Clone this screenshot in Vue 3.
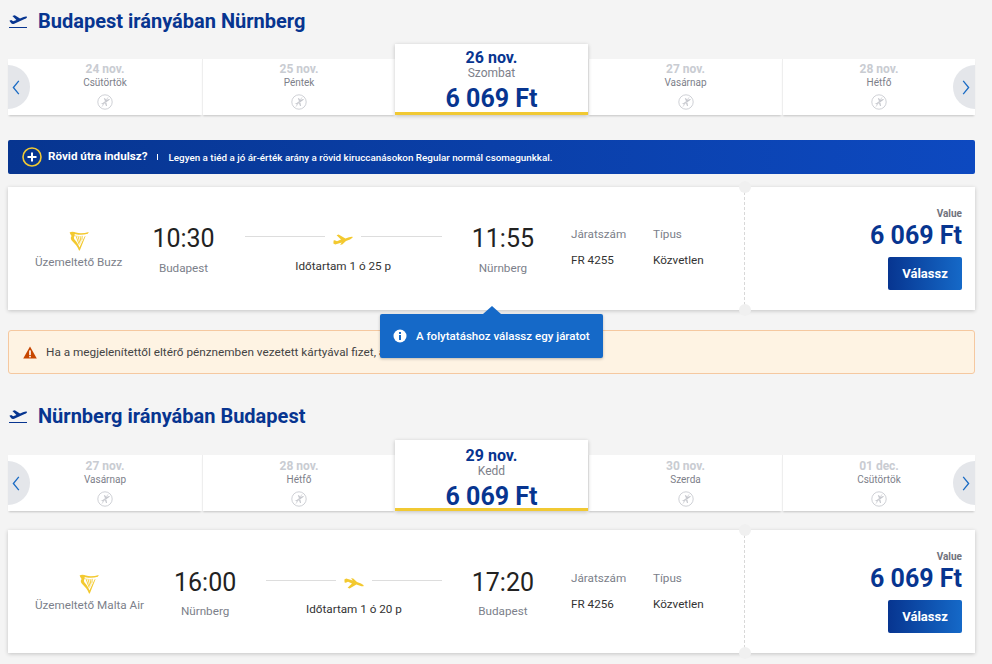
<template>
  <div class="page">
    <section v-for="(leg, i) in legs" :key="i" class="leg" :class="{ second: i === 1 }">
      <h2 class="title">
        <svg class="title-icon" viewBox="0 0 18 15">
          <path d="M0.4 6.8 L2.2 6.1 L4.2 7.3 L7.4 6 L3.4 1.9 L5.8 1.2 L11 4.6 L14.6 3 C16 2.4 17.7 2.2 18 2.9 C18.2 3.6 17 4.5 15.6 5.1 L5.2 9.8 C3.8 10.4 3 10.1 2.2 9.3 Z" fill="#073590"/>
          <rect x="0" y="13" width="18" height="1" fill="#073590"/>
        </svg>
        {{ leg.title }}
      </h2>

      <div class="strip">
        <div class="cells">
          <template v-for="d in leg.days" :key="d.date">
            <div v-if="d.price" class="cell active">
              <div class="a-date">{{ d.date }}</div>
              <div class="a-day">{{ d.day }}</div>
              <div class="a-price">{{ d.price }}</div>
            </div>
            <div v-else class="cell">
              <div class="c-date">{{ d.date }}</div>
              <div class="c-day">{{ d.day }}</div>
              <svg class="no-flight" viewBox="0 0 16 16">
                <circle cx="8" cy="8" r="7.2" fill="none" stroke="#cfd1d6" stroke-width="1"/>
                <path d="M3.6 9.2 L5 9.4 L10.6 5.6 C11.6 5 12.6 4.8 12.7 5.3 C12.8 5.8 12 6.5 11 7 L5.6 10.6 Z M6.8 4.2 L8 4.2 L9.6 6.6 L8.2 7.4 Z M8 9.2 L9.4 8.4 L10 12 L9 12 Z" fill="#c4c6cc"/>
                <path d="M5 12.6 L11 3.4" stroke="#cfd1d6" stroke-width="0.8"/>
              </svg>
            </div>
          </template>
        </div>
        <div class="arrow left">
          <svg viewBox="0 0 8 16" class="chev"><path d="M7 1 L1.2 8 L7 15" fill="none" stroke="#1a6bc4" stroke-width="1.4"/></svg>
        </div>
        <div class="arrow right">
          <svg viewBox="0 0 8 16" class="chev"><path d="M1 1 L6.8 8 L1 15" fill="none" stroke="#1a6bc4" stroke-width="1.4"/></svg>
        </div>
      </div>

      <div v-if="i === 0" class="promo">
        <svg class="plus" viewBox="0 0 20 20">
          <circle cx="10" cy="10" r="9" fill="none" stroke="#f1c933" stroke-width="1.6"/>
          <path d="M10 5.5 V14.5 M5.5 10 H14.5" stroke="#fff" stroke-width="2"/>
        </svg>
        <span class="promo-title">Rövid útra indulsz?</span>
        <span class="promo-sep"></span>
        <span class="promo-text">Legyen a tiéd a jó ár-érték arány a rövid kiruccanásokon Regular normál csomagunkkal.</span>
      </div>

      <div class="card">
        <div class="main">
          <div class="operator">
            <svg class="harp" viewBox="0 0 20 20">
              <path d="M0.6 1.6 C2.6 0.2 5 0.8 7 1.6 C10.6 2.8 15.4 2.4 19.8 1 L18.8 2.8 C14.6 4 10.4 4.2 6.8 3.2 L5.4 3 C6.4 4 5.6 5 5 6 C4.6 7.2 5.4 8.4 6.4 9.6 C8 11.6 9.6 13.8 10.4 16.4 L15.6 5.6 L16.6 5 L10.8 19.6 L10 19.6 C8.8 15.6 5.8 12.6 3.4 10.2 C1.8 8.6 1.2 6.8 2.6 5 C1.8 4 1 2.8 0.6 1.6 Z" fill="#f3c92f"/>
              <path d="M6.8 4.4 L10.2 13.6 M8.9 4.8 L11 12.4 M11 5 L11.9 10.6 M13.2 4.8 L12.9 8.8" stroke="#f3c92f" stroke-width="0.9" fill="none"/>
            </svg>
            <div class="muted">Üzemeltető {{ leg.operator }}</div>
          </div>
          <div class="stop">
            <div class="time">{{ leg.dep }}</div>
            <div class="muted city">{{ leg.from }}</div>
          </div>
          <div class="route">
            <div class="route-line">
              <span class="rule"></span>
              <svg class="route-plane" :class="{ flip: i === 1 }" viewBox="0 0 20 11">
                <path d="M0.4 9.6 L2.2 10.4 L8.8 8.6 L7 10.8 L9.2 10.4 L13 7 L17 5.4 C18.6 4.6 20 3.6 19.7 3 C19.4 2.4 17.6 2.6 16 3.2 L12.4 4.6 L5.6 0.6 L3.6 1.2 L8 5.6 L4 7.2 L1.8 6.2 L0.6 6.6 Z" fill="#f3c92f"/>
              </svg>
              <span class="rule"></span>
            </div>
            <div class="duration">Időtartam {{ leg.duration }}</div>
          </div>
          <div class="stop">
            <div class="time">{{ leg.arr }}</div>
            <div class="muted city">{{ leg.to }}</div>
          </div>
          <div class="info number">
            <div class="muted">Járatszám</div>
            <div class="val">{{ leg.flight }}</div>
          </div>
          <div class="info">
            <div class="muted">Típus</div>
            <div class="val">Közvetlen</div>
          </div>
        </div>
        <div class="fare">
          <div class="fare-name">Value</div>
          <div class="fare-price">6 069 Ft</div>
          <button class="pick" type="button">Válassz</button>
        </div>
        <span class="notch top"></span>
        <span class="notch bottom"></span>

        <div v-if="i === 0" class="tip">
          <svg class="tip-icon" viewBox="0 0 14 14">
            <circle cx="7" cy="7" r="6.5" fill="#fff"/>
            <rect x="6" y="6" width="2" height="5" fill="#1569c8"/>
            <rect x="6" y="3" width="2" height="2" fill="#1569c8"/>
          </svg>
          A folytatáshoz válassz egy járatot
        </div>
      </div>

      <div v-if="i === 0" class="alert">
        <svg class="warn" viewBox="0 0 14 13">
          <path d="M7 0.4 L13.8 12.6 H0.2 Z" fill="#c74600"/>
          <rect x="6.2" y="4.4" width="1.6" height="4.6" fill="#fff"/>
          <rect x="6.2" y="9.8" width="1.6" height="1.6" fill="#fff"/>
        </svg>
        Ha a megjelenítettől eltérő pénznemben vezetett kártyával fizet, a
      </div>
    </section>
  </div>
</template>

<script setup>
const legs = [
  {
    title: 'Budapest irányában Nürnberg',
    days: [
      { date: '24 nov.', day: 'Csütörtök' },
      { date: '25 nov.', day: 'Péntek' },
      { date: '26 nov.', day: 'Szombat', price: '6 069 Ft' },
      { date: '27 nov.', day: 'Vasárnap' },
      { date: '28 nov.', day: 'Hétfő' }
    ],
    operator: 'Buzz',
    dep: '10:30',
    from: 'Budapest',
    arr: '11:55',
    to: 'Nürnberg',
    duration: '1 ó 25 p',
    flight: 'FR 4255'
  },
  {
    title: 'Nürnberg irányában Budapest',
    days: [
      { date: '27 nov.', day: 'Vasárnap' },
      { date: '28 nov.', day: 'Hétfő' },
      { date: '29 nov.', day: 'Kedd', price: '6 069 Ft' },
      { date: '30 nov.', day: 'Szerda' },
      { date: '01 dec.', day: 'Csütörtök' }
    ],
    operator: 'Malta Air',
    dep: '16:00',
    from: 'Nürnberg',
    arr: '17:20',
    to: 'Budapest',
    duration: '1 ó 20 p',
    flight: 'FR 4256'
  }
];
</script>

<style>
html, body {
  margin: 0;
  background: #f4f4f4;
}
</style>

<style scoped>
.page {
  width: 967px;
  height: 664px;
  overflow: hidden;
  padding: 9px 17px 0 8px;
  font-family: Roboto, "Liberation Sans", sans-serif;
  color: #222;
}

.leg.second {
  margin-top: 30px;
}

.title {
  display: flex;
  align-items: center;
  gap: 11px;
  margin: 0;
  height: 24px;
  font-size: 20px;
  font-weight: 700;
  line-height: 23px;
  color: #073590;
}

.title-icon {
  width: 18px;
  height: 15px;
  margin-left: 1px;
}

.strip {
  position: relative;
  margin-top: 11px;
  height: 72px;
}

.second .strip {
  margin-top: 12px;
}

.cells {
  display: grid;
  grid-template-columns: 194px 193px 193px 194px 193px;
  height: 72px;
}

.cell {
  margin-top: 15px;
  height: 56px;
  background: #fff;
  border-left: 1px solid #eee;
  box-shadow: 0 2px 2px -1px rgba(0, 0, 0, 0.2);
  display: flex;
  flex-direction: column;
  align-items: center;
  padding-top: 4px;
  box-sizing: border-box;
}

.cell:first-child {
  border-left: 0;
}

.second .cell {
  padding-top: 5px;
}

.c-date {
  font-size: 12px;
  line-height: 13px;
  font-weight: 700;
  color: #c9ccd2;
}

.c-day {
  font-size: 10px;
  line-height: 13px;
  color: #7d808a;
}

.no-flight {
  width: 16px;
  height: 16px;
  margin-top: 5px;
}

.cell.active {
  margin-top: 0;
  height: 71px;
  position: relative;
  z-index: 1;
  border-left: 0;
  border-bottom: 3px solid #f1c933;
  padding-top: 5px;
  box-shadow: 0 1px 4px rgba(0, 0, 0, 0.22);
}

.second .cell.active {
  padding-top: 7px;
}

.a-date {
  font-size: 16px;
  line-height: 17px;
  font-weight: 700;
  color: #073590;
}

.a-day {
  font-size: 12px;
  line-height: 14px;
  color: #7d808a;
}

.a-price {
  margin-top: 5px;
  font-size: 25px;
  line-height: 28px;
  font-weight: 700;
  color: #073590;
}

.arrow {
  position: absolute;
  top: 21px;
  z-index: 2;
  width: 22px;
  height: 44px;
  background: #e4e6ea;
  display: flex;
  align-items: center;
  box-sizing: border-box;
}

.arrow.left {
  left: 0;
  padding-left: 4px;
  border-radius: 0 22px 22px 0;
}

.arrow.right {
  right: 0;
  padding-left: 9px;
  border-radius: 22px 0 0 22px;
}

.chev {
  width: 8px;
  height: 15px;
}

.promo {
  display: flex;
  align-items: center;
  margin-top: 24px;
  height: 34px;
  padding-left: 14px;
  border-radius: 2px;
  background: linear-gradient(90deg, #073590, #0d49c0);
  color: #fff;
}

.plus {
  width: 20px;
  height: 20px;
  margin-right: 6px;
}

.promo-title {
  font-size: 11.65px;
  font-weight: 700;
  margin-bottom: 3px;
}

.promo-sep {
  width: 1px;
  height: 6px;
  background: #fff;
  margin: 0 10px;
}

.promo-text {
  font-size: 9.85px;
  font-weight: 500;
}

.card {
  position: relative;
  display: flex;
  margin-top: 13px;
  height: 123px;
  background: #fff;
  box-shadow: 0 1px 4px rgba(0, 0, 0, 0.2);
}

.second .card {
  margin-top: 18px;
}

.main {
  flex: 1;
  display: flex;
  align-items: flex-start;
  padding: 37px 0 0 27px;
  border-right: 1px dashed #d8d8d8;
  box-sizing: border-box;
}

.second .main {
  padding-top: 38px;
}

.operator {
  display: flex;
  flex-direction: column;
  align-items: center;
  margin-top: 7px;
  margin-right: 30px;
}

.second .operator {
  margin-top: 6px;
}

.harp {
  display: block;
  width: 20px;
  height: 20px;
  margin-bottom: 3px;
}

.muted {
  font-size: 11.7px;
  line-height: 16px;
  color: #7c7f8a;
}

.stop {
  display: flex;
  flex-direction: column;
  align-items: center;
}

.time {
  font-size: 25px;
  line-height: 30px;
  color: #222;
}

.city {
  margin-top: 6px;
}

.second .city {
  margin-top: 5px;
}

.route {
  flex: 1;
  padding: 0 30px;
  margin-top: 4px;
  box-sizing: border-box;
}

.route-line {
  display: flex;
  align-items: center;
  height: 22px;
  gap: 8px;
}

.rule {
  flex: 1;
  height: 1px;
  margin-top: -6px;
  background: #ddd;
}

.route-plane {
  width: 20px;
  height: 11px;
}

.route-plane.flip {
  transform: scaleY(-1);
}

.duration {
  margin-top: 8px;
  font-size: 11.7px;
  line-height: 16px;
  text-align: center;
  color: #333;
}

.second .duration {
  margin-top: 7px;
}

.info {
  margin-top: 2px;
  width: 91px;
}

.info.number {
  margin-left: 37px;
  width: 82px;
}

.val {
  margin-top: 10px;
  font-size: 11.7px;
  line-height: 16px;
  color: #333;
}

.fare {
  width: 230px;
  box-sizing: border-box;
  padding: 21px 13px 0 0;
  display: flex;
  flex-direction: column;
  align-items: flex-end;
}

.fare-name {
  font-size: 10px;
  line-height: 11px;
  font-weight: 700;
  color: #6f727c;
}

.fare-price {
  margin-top: 3px;
  font-size: 25px;
  line-height: 28px;
  font-weight: 700;
  color: #073590;
}

.pick {
  margin-top: 7px;
  width: 74px;
  height: 33px;
  padding: 0;
  border: 0;
  border-radius: 2px;
  background: linear-gradient(90deg, #073590, #1569c8);
  color: #fff;
  font-family: inherit;
  font-size: 13px;
  font-weight: 700;
}

.notch {
  position: absolute;
  left: 731px;
  width: 12px;
  height: 12px;
  border-radius: 50%;
  background: #f0f0f0;
}

.notch.top {
  top: -6px;
}

.notch.bottom {
  bottom: -6px;
}

.tip {
  position: absolute;
  left: 372px;
  top: 127px;
  z-index: 3;
  display: flex;
  align-items: center;
  gap: 9px;
  box-sizing: border-box;
  width: 223px;
  height: 44px;
  padding-left: 13px;
  border-radius: 2px;
  background: #1569c8;
  color: #fff;
  font-size: 11.55px;
  font-weight: 500;
  white-space: nowrap;
  box-shadow: 0 1px 3px rgba(0, 0, 0, 0.25);
}

.tip::before {
  content: "";
  position: absolute;
  left: 103px;
  top: -8px;
  border-left: 9px solid transparent;
  border-right: 9px solid transparent;
  border-bottom: 8px solid #1569c8;
}

.tip-icon {
  width: 14px;
  height: 14px;
}

.alert {
  display: flex;
  align-items: center;
  gap: 9px;
  margin-top: 20px;
  height: 44px;
  padding-left: 14px;
  box-sizing: border-box;
  background: #fef3e3;
  border: 1px solid #f5c8a0;
  border-radius: 3px;
  font-size: 11.75px;
  color: #444;
}

.warn {
  width: 14px;
  height: 13px;
}
</style>
